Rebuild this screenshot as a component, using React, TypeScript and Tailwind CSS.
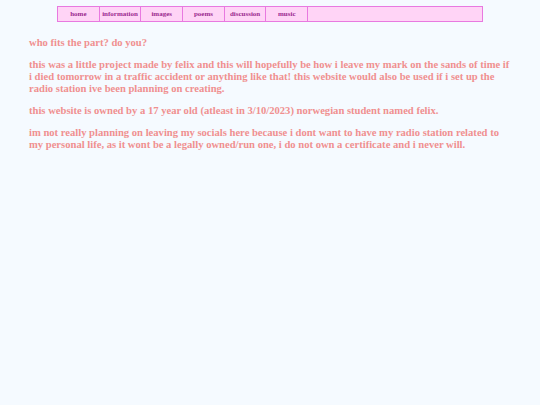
export default function App() {
  const links = ['home', 'information', 'images', 'poems', 'discussion', 'music']

  return (
    <div className="min-h-[405px] w-full bg-[#f5faff] pt-[6px] font-['Liberation_Serif',serif] font-bold">
      <nav className="mx-auto flex h-[16px] w-[426px] border border-[#e879e0] bg-[#ffd4f6]">
        {links.map((l) => (
          <a
            key={l}
            className="flex w-[41.7px] items-center justify-center border-r border-[#e879e0] text-[7px] text-[#9b2a8f]"
          >
            {l}
          </a>
        ))}
        <div className="flex-1" />
      </nav>

      <div className="pl-[29px] pr-[26px] pt-[15px] text-[10.6px] leading-[12px] text-[#f09090]">
        <p className="mb-[10px]">who fits the part? do you?</p>
        <p className="mb-[10px]">
          this was a little project made by felix and this will hopefully be how i leave my mark on the sands of time if i
          died tomorrow in a traffic accident or anything like that! this website would also be used if i set up the radio
          station ive been planning on creating.
        </p>
        <p className="mb-[10px]">this website is owned by a 17 year old (atleast in 3/10/2023) norwegian student named felix.</p>
        <p>
          im not really planning on leaving my socials here because i dont want to have my radio station related to my
          personal life, as it wont be a legally owned/run one, i do not own a certificate and i never will.
        </p>
      </div>
    </div>
  )
}
